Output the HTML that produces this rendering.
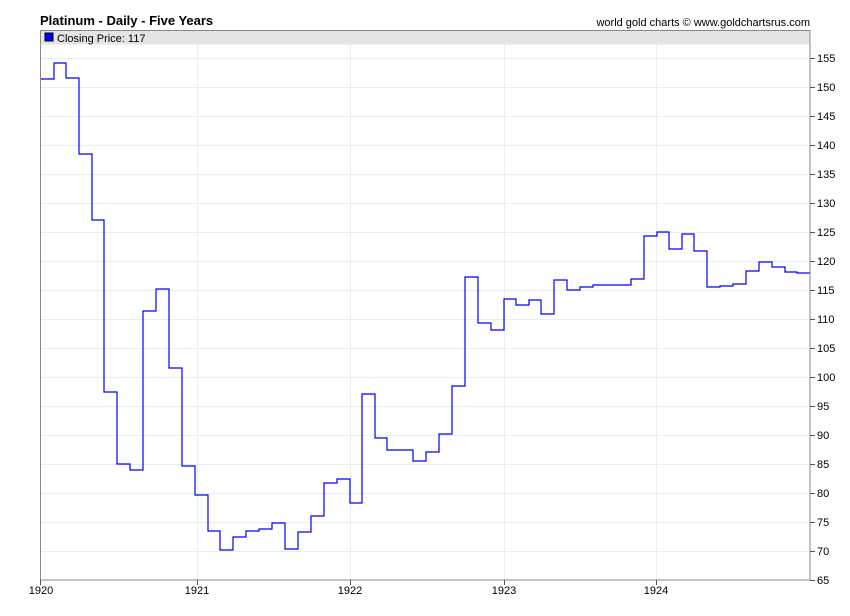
<!DOCTYPE html>
<html><head><style>body{margin:0;background:#fff}svg{display:block;font-family:"Liberation Sans",sans-serif}</style></head><body>
<svg width="850" height="616" xmlns="http://www.w3.org/2000/svg">
<rect width="850" height="616" fill="#fff"/>
<text x="40" y="25" font-size="13" font-weight="bold" fill="#000">Platinum - Daily - Five Years</text>
<text x="810" y="26" font-size="11" text-anchor="end" fill="#000">world gold charts © www.goldchartsrus.com</text>
<g stroke="#e3eef8" stroke-width="1">
<path d="M40 551.5H810M40 522.5H810M40 493.5H810M40 464.5H810M40 435.5H810M40 406.5H810M40 377.5H810M40 348.5H810M40 319.5H810M40 290.5H810M40 261.5H810M40 232.5H810M40 203.5H810M40 174.5H810M40 145.5H810M40 116.5H810M40 87.5H810M40 58.5H810"/>
<path d="M197.5 30V580M350.5 30V580M504.5 30V580M656.5 30V580"/>
</g>
<rect x="40.5" y="30.5" width="769" height="14" fill="#e4e4e4"/>
<rect x="45" y="33" width="8" height="8" fill="#0000ff" stroke="#000" stroke-width="1"/>
<text x="57" y="42" font-size="11" fill="#000">Closing Price: 117</text>
<path fill="none" stroke="#0000ff" stroke-width="1.2" d="M40 79H54V63H66V78H79V154H92V220H104V392H117V464H130V470H143V311H156V289H169V368H182V466H195V495H208V531H220V550H233V537H246V531H259V529H272V523H285V549H298V532H311V516H324V483H337V479H350V503H362V394H375V438H387V450H413V461H426V452H439V434H452V386H465V277H478V323H491V330H504V299H516V305H529V300H541V314H554V280H567V290H580V287H593V285H631V279H644V236H657V232H669V249H682V234H694V251H707V287H720V286H733V284H746V271H759V262H772V267H785V272H797V273H810V274"/>
<rect x="40.5" y="30.5" width="769.5" height="549.5" fill="none" stroke="#888"/>
<g stroke="#555"><path d="M810 580.5h5M810 551.5h5M810 522.5h5M810 493.5h5M810 464.5h5M810 435.5h5M810 406.5h5M810 377.5h5M810 348.5h5M810 319.5h5M810 290.5h5M810 261.5h5M810 232.5h5M810 203.5h5M810 174.5h5M810 145.5h5M810 116.5h5M810 87.5h5M810 58.5h5"/>
<path d="M40.5 580v5M197.5 580v5M350.5 580v5M504.5 580v5M656.5 580v5"/></g>
<g font-size="11" fill="#000">
<text x="817" y="584">65</text><text x="817" y="555">70</text><text x="817" y="526">75</text><text x="817" y="497">80</text><text x="817" y="468">85</text><text x="817" y="439">90</text><text x="817" y="410">95</text><text x="817" y="381">100</text><text x="817" y="352">105</text><text x="817" y="323">110</text><text x="817" y="294">115</text><text x="817" y="265">120</text><text x="817" y="236">125</text><text x="817" y="207">130</text><text x="817" y="178">135</text><text x="817" y="149">140</text><text x="817" y="120">145</text><text x="817" y="91">150</text><text x="817" y="62">155</text>
</g>
<g font-size="11" fill="#000" text-anchor="middle">
<text x="41" y="594">1920</text><text x="197" y="594">1921</text><text x="350" y="594">1922</text><text x="504" y="594">1923</text><text x="656" y="594">1924</text>
</g>
</svg>
</body></html>
